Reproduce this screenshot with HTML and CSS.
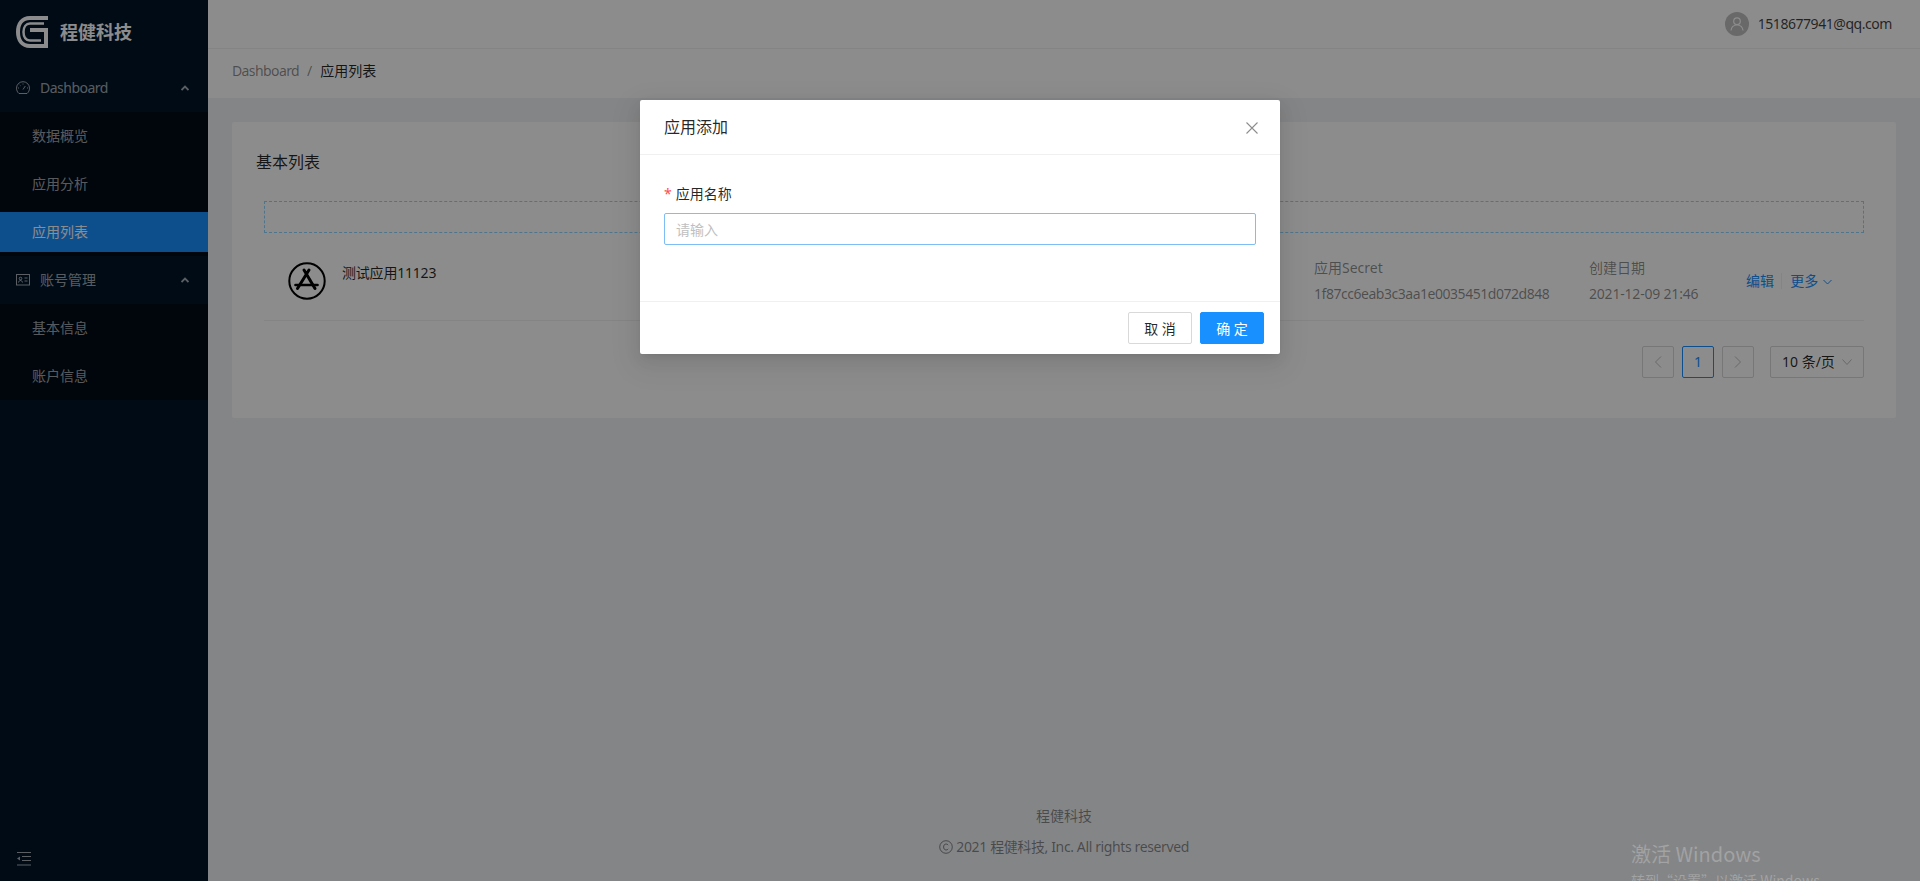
FILE: index.html
```html
<!DOCTYPE html>
<html lang="zh-CN">
<head>
    <meta charset="UTF-8">
    <title>应用列表</title>
    <link rel="stylesheet" href="styles.css">
</head>
<body>

<div class="layout">
    <aside class="sider">
        <div class="logo">
            <svg class="logo-mark" width="32" height="32" viewBox="0 0 32 32" fill="none" stroke="#fff" stroke-width="4">
                <path d="M32 2H14C6 2 2 8 2 16s4 14 12 14h16V14H14"/>
                <path d="M28 7.500H14c-4 0-6.500 3.500-6.500 8.500s2.500 8.500 6.500 8.500h11" stroke-width="2.500"/>
            </svg>
            <span class="logo-name">程健科技</span>
        </div>

        <nav class="menu">
            <div class="menu-group">
                <svg class="menu-icon" width="14" height="14" viewBox="0 0 14 14" fill="none" stroke="currentColor">
                    <path d="M3 12.500C1.500 11.300.5 9.300.5 7.200a6.500 6.500 0 0 1 13 0c0 2.100-1 4.100-2.500 5.300z"/>
                    <path d="M7 8.500 9.300 5M7 2.500v1M3 7H2M12 7h-1M3.800 4l.7.700"/>
                </svg>
                <span class="menu-label menu-label-en">Dashboard</span>
                <svg class="menu-arrow" width="8" height="6" viewBox="0 0 8 6" fill="none" stroke="currentColor" stroke-width="1.800"><path d="M.5 5 4 1.500 7.500 5"/></svg>
            </div>
            <div class="submenu">
                <a class="submenu-item">数据概览</a>
                <a class="submenu-item">应用分析</a>
                <a class="submenu-item active">应用列表</a>
            </div>

            <div class="menu-group">
                <svg class="menu-icon" width="14" height="12" viewBox="0 0 14 12" fill="none" stroke="currentColor">
                    <rect x=".5" y=".5" width="13" height="10.500"/>
                    <circle cx="4.500" cy="4.500" r="1.300"/>
                    <path d="M2.500 8.500c.3-1.300 1-2 2-2s1.700.7 2 2M8.500 4h3M8.500 7h3"/>
                </svg>
                <span class="menu-label">账号管理</span>
                <svg class="menu-arrow" width="8" height="6" viewBox="0 0 8 6" fill="none" stroke="currentColor" stroke-width="1.800"><path d="M.5 5 4 1.500 7.500 5"/></svg>
            </div>
            <div class="submenu">
                <a class="submenu-item">基本信息</a>
                <a class="submenu-item">账户信息</a>
            </div>
        </nav>

        <div class="sider-trigger">
            <svg width="14" height="14" viewBox="0 0 14 14" fill="none" stroke="currentColor">
                <path d="M0 .5h14M5 4.500h9M5 8.500h9M0 13h14"/>
                <path d="M3 4.500v4L0 6.500z" fill="currentColor" stroke="none"/>
            </svg>
        </div>
    </aside>

    <div class="main">
        <header class="header">
            <span class="user-avatar">
                <svg width="14" height="14" viewBox="0 0 14 14" fill="none" stroke="#fff" stroke-width="1.200">
                    <circle cx="7" cy="4.200" r="3.300"/>
                    <path d="M1 13.500c.4-3.300 2.800-5.500 6-5.500s5.600 2.200 6 5.500"/>
                </svg>
            </span>
            <span class="user-name">1518677941@qq.com</span>
        </header>

        <div class="breadcrumb">
            <span class="crumb">Dashboard</span>
            <span class="crumb-sep">/</span>
            <span class="crumb-current">应用列表</span>
        </div>

        <main class="content">
            <section class="card">
                <h2 class="card-title">基本列表</h2>
                <div class="card-body">
                    <div class="add-box"></div>

                    <div class="list-row">
                        <div class="app-meta">
                            <svg class="app-icon" width="38" height="38" viewBox="0 0 38 38" fill="none" stroke="#000">
                                <circle cx="19" cy="19" r="17.700" stroke-width="2"/>
                                <path d="M16 8l11 18.500M21 8 9.500 26.500" stroke-width="3" stroke-linecap="round"/>
                                <path d="M7.500 23h22" stroke-width="2.600" stroke-linecap="round"/>
                            </svg>
                            <span class="app-name">测试应用11123</span>
                        </div>
                        <div class="col col-secret">
                            <div class="col-label">应用Secret</div>
                            <div class="col-value secret-value">1f87cc6eab3c3aa1e0035451d072d848</div>
                        </div>
                        <div class="col col-date">
                            <div class="col-label">创建日期</div>
                            <div class="col-value">2021-12-09 21:46</div>
                        </div>
                        <div class="actions">
                            <a class="action">编辑</a>
                            <span class="action-split"></span>
                            <a class="action">更多
                                <svg width="9" height="6" viewBox="0 0 9 6" fill="none" stroke="currentColor"><path d="M.5 1l4 4 4-4"/></svg>
                            </a>
                        </div>
                    </div>

                    <div class="pagination">
                        <span class="page-btn">
                            <svg width="8" height="12" viewBox="0 0 8 12" fill="none" stroke="#bfbfbf"><path d="M7 .5 1.500 6 7 11.500"/></svg>
                        </span>
                        <span class="page-btn current">1</span>
                        <span class="page-btn">
                            <svg width="8" height="12" viewBox="0 0 8 12" fill="none" stroke="#bfbfbf"><path d="M1 .5 6.500 6 1 11.500"/></svg>
                        </span>
                        <span class="page-size">10 条/页
                            <svg width="10" height="6" viewBox="0 0 10 6" fill="none" stroke="#bfbfbf"><path d="M.5.500 5 5.500l4.500-5"/></svg>
                        </span>
                    </div>
                </div>
            </section>
        </main>

        <footer class="footer">
            <div class="footer-links">程健科技</div>
            <div class="footer-copy">
                <svg width="14" height="14" viewBox="0 0 14 14" fill="none" stroke="currentColor">
                    <circle cx="7" cy="7" r="6.300"/>
                    <path d="M9.200 5.200C8.700 4.400 8 4 7.100 4 5.500 4 4.600 5.300 4.600 7s.9 3 2.500 3c.9 0 1.600-.4 2.100-1.200"/>
                </svg>
                2021 程健科技, Inc. All rights reserved
            </div>
        </footer>
    </div>
</div>

<!-- 弹窗遮罩 -->
<div class="mask">
    <div class="modal">
        <div class="modal-header">
            <span class="modal-title">应用添加</span>
            <svg class="modal-close" width="12" height="12" viewBox="0 0 12 12" fill="none" stroke="currentColor" stroke-width="1.100"><path d="M.5.500l11 11M11.500.500l-11 11"/></svg>
        </div>
        <div class="modal-body">
            <label class="form-label"><span class="required">*</span>应用名称</label>
            <input class="form-input" type="text" placeholder="请输入">
        </div>
        <div class="modal-footer">
            <button class="btn">取 消</button>
            <button class="btn btn-primary">确 定</button>
        </div>
    </div>
</div>

<div class="watermark">
    <div class="watermark-title">激活 Windows</div>
    <div class="watermark-sub">转到“设置”以激活 Windows</div>
</div>

</body>
</html>
```

FILE: styles.css
```css
* {
    box-sizing: border-box;
}

html, body {
    height: 100%;
    margin: 0;
    overflow: hidden;
}

body {
    position: relative;
    font-family: "Noto Sans", "Noto Sans CJK SC", sans-serif;
    font-size: 14px;
    line-height: 22px;
    color: rgba(0, 0, 0, 0.85);
    background-color: #f0f2f5;
}

.layout {
    display: flex;
    height: 100%;
}

/* 侧边栏 */
.sider {
    width: 208px;
    flex-shrink: 0;
    display: flex;
    flex-direction: column;
    background-color: #001529;
    color: rgba(255, 255, 255, 0.65);
}

.logo {
    height: 64px;
    padding: 16px;
    display: flex;
    align-items: center;
    gap: 12px;
}

.logo-name {
    font-size: 18px;
    font-weight: 700;
    color: #fff;
}

.menu {
    flex: 1;
}

.menu-group {
    height: 48px;
    padding: 0 19px 0 16px;
    display: flex;
    align-items: center;
}

.menu-icon {
    margin-right: 10px;
}

.menu-label {
    flex: 1;
}

.menu-label-en {
    letter-spacing: -0.5px;
}

.submenu {
    padding: 4px 0;
    background-color: #000c17;
}

.submenu-item {
    display: block;
    height: 40px;
    line-height: 40px;
    padding-left: 32px;
    margin-bottom: 8px;
}

.submenu-item:last-child {
    margin-bottom: 0;
}

.submenu-item.active {
    background-color: #1890ff;
    color: #fff;
}

.sider-trigger {
    height: 48px;
    padding: 17px 17px 0;
    color: rgba(255, 255, 255, 0.65);
}

/* 主区域 */
.main {
    flex: 1;
    min-width: 0;
    display: flex;
    flex-direction: column;
}

.header {
    height: 49px;
    padding-right: 28px;
    display: flex;
    align-items: center;
    justify-content: flex-end;
    background-color: #fff;
    border-bottom: 1px solid #f0f0f0;
}

.user-avatar {
    width: 24px;
    height: 24px;
    margin-right: 9px;
    border-radius: 50%;
    display: flex;
    align-items: center;
    justify-content: center;
    background-color: #bfbfbf;
}

.user-name {
    letter-spacing: -0.45px;
    color: rgba(0, 0, 0, 0.75);
}

.breadcrumb {
    height: 49px;
    padding: 0 0 5px 24px;
    display: flex;
    align-items: center;
    background-color: #fff;
}

.crumb {
    letter-spacing: -0.6px;
    color: rgba(0, 0, 0, 0.45);
}

.crumb-sep {
    margin: 0 8px;
    color: rgba(0, 0, 0, 0.45);
}

.content {
    flex: 1;
    padding: 24px;
}

.card {
    background-color: #fff;
    border-radius: 2px;
}

.card-title {
    margin: 0;
    padding: 28px 24px 27px;
    font-size: 16px;
    font-weight: 400;
    line-height: 24px;
}

.card-body {
    padding: 0 32px 40px;
}

.add-box {
    height: 32px;
    margin-bottom: 8px;
    border: 1px dashed #91d5ff;
}

.list-row {
    padding: 16px 32px 15px 24px;
    display: flex;
    align-items: center;
    border-bottom: 1px solid #f0f0f0;
}

.app-meta {
    flex: 1;
    align-self: flex-start;
    margin-top: 5px;
    display: flex;
    align-items: flex-start;
    gap: 16px;
}

.app-name {
    letter-spacing: -0.2px;
}

.col {
    color: rgba(0, 0, 0, 0.45);
}

.col-secret {
    width: 275px;
}

.col-date {
    width: 157px;
}

.col-value {
    margin-top: 4px;
    letter-spacing: -0.2px;
}

.secret-value {
    letter-spacing: -0.47px;
}

.actions {
    width: 86px;
    display: flex;
    align-items: center;
}

.action {
    color: #1890ff;
    white-space: nowrap;
}

.action-split {
    width: 1px;
    height: 16px;
    margin: 0 9px 0 7px;
    background-color: #f0f0f0;
}

.action svg {
    margin-left: 1px;
    vertical-align: 1px;
}

.pagination {
    margin-top: 25px;
    display: flex;
    justify-content: flex-end;
    gap: 8px;
}

.page-btn {
    width: 32px;
    height: 32px;
    display: flex;
    align-items: center;
    justify-content: center;
    border: 1px solid #d9d9d9;
    border-radius: 2px;
}

.page-btn.current {
    border-color: #1890ff;
    color: #1890ff;
}

.page-size {
    width: 94px;
    height: 32px;
    margin-left: 8px;
    padding: 0 11px;
    display: flex;
    align-items: center;
    justify-content: space-between;
    white-space: nowrap;
    border: 1px solid #d9d9d9;
    border-radius: 2px;
}

.footer {
    margin-bottom: 23px;
    text-align: center;
    color: rgba(0, 0, 0, 0.45);
}

.footer-links {
    margin-bottom: 9px;
}

.footer-copy {
    letter-spacing: -0.38px;
}

.footer-copy svg {
    vertical-align: -2px;
}

/* 弹窗 */
.mask {
    position: absolute;
    top: 0;
    left: 0;
    width: 100%;
    height: 100%;
    padding-top: 100px;
    background-color: rgba(0, 0, 0, 0.45);
}

.modal {
    width: 640px;
    margin: 0 auto;
    background-color: #fff;
    border-radius: 2px;
    box-shadow: 0 3px 6px -4px rgba(0, 0, 0, 0.12), 0 6px 16px rgba(0, 0, 0, 0.08), 0 9px 28px 8px rgba(0, 0, 0, 0.05);
}

.modal-header {
    height: 55px;
    padding: 0 22px 0 24px;
    display: flex;
    align-items: center;
    justify-content: space-between;
    border-bottom: 1px solid #f0f0f0;
}

.modal-title {
    font-size: 16px;
}

.modal-close {
    margin-top: 2px;
    color: rgba(0, 0, 0, 0.45);
}

.modal-body {
    height: 146px;
    padding: 28px 24px 0;
}

.form-label {
    display: block;
    margin-bottom: 8px;
}

.required {
    margin-right: 4px;
    color: #ff4d4f;
}

.form-input {
    width: 100%;
    height: 32px;
    padding: 4px 11px;
    display: block;
    font-family: inherit;
    font-size: 14px;
    outline: none;
    border: 1px solid #7fbdf5;
    border-radius: 2px;
}

.form-input::placeholder {
    color: #bfbfbf;
}

.modal-footer {
    height: 53px;
    padding: 10px 16px;
    display: flex;
    justify-content: flex-end;
    gap: 8px;
    border-top: 1px solid #f0f0f0;
}

.btn {
    width: 64px;
    height: 32px;
    padding: 0;
    font-family: inherit;
    font-size: 14px;
    color: rgba(0, 0, 0, 0.85);
    background-color: #fff;
    border: 1px solid #d9d9d9;
    border-radius: 2px;
}

.btn-primary {
    color: #fff;
    background-color: #1890ff;
    border-color: #1890ff;
}

/* 系统水印 */
.watermark {
    position: absolute;
    top: 840px;
    left: 1631px;
    white-space: nowrap;
    font-family: "Noto Sans CJK SC", sans-serif;
    color: rgba(255, 255, 255, 0.25);
}

.watermark-title {
    font-size: 20px;
    line-height: 28px;
}

.watermark-sub {
    margin-top: 2px;
    line-height: 20px;
}
```
